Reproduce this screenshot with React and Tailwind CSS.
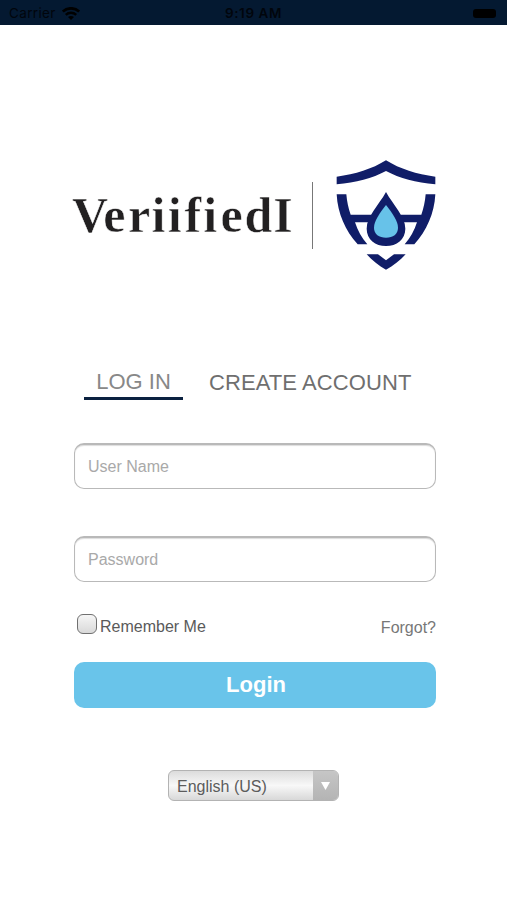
import { useState } from "react";

function WifiIcon() {
  return (
    <svg width="18" height="13" viewBox="0 0 18 13" fill="none">
      <path d="M.8 4.6C5.4.2 12.6.2 17.2 4.6" stroke="#000" strokeWidth="2.7" />
      <path d="M3.8 7.9c3-2.8 7.4-2.8 10.4 0" stroke="#000" strokeWidth="2.5" />
      <path d="M9 13 6 10c1.8-1.5 4.2-1.5 6 0z" fill="#000" />
    </svg>
  );
}

function StatusBar() {
  return (
    <header className="grid h-[25px] grid-cols-3 items-center bg-[#041931] pt-[2px] pr-[11px] pl-[9px] font-['Inter',sans-serif] text-[13.5px] leading-none text-[#01050c]">
      <div className="flex items-center gap-1.5">
        <span className="pt-px tracking-[0.35px]">Carrier</span>
        <WifiIcon />
      </div>
      <span className="pt-px pl-[2px] text-center text-[13.5px] font-semibold tracking-[0.55px]">
        9:19 AM
      </span>
      <span className="h-[9px] w-[23px] justify-self-end rounded-[3px] bg-black" />
    </header>
  );
}

function Wordmark() {
  return (
    <svg
      width="222"
      height="62"
      viewBox="0 0 222 62"
      className="mt-[26px] shrink-0"
    >
      <text
        x="0 31.2 56 79.5 95.7 112.5 131.3 148.5 172.5 201.3"
        y="46"
        fill="#222021"
        fontFamily="'Liberation Serif', serif"
        fontSize="50"
        fontWeight="700"
        stroke="#fff"
        strokeWidth="0.5"
      >
        VeriifiedI
      </text>
    </svg>
  );
}

function Shield() {
  return (
    <svg width="100" height="110" viewBox="258 29 300 330">
      <g fill="#101d68">
        <path d="M260 79C316 72 366 56 408 30c42 26 92 42 148 49v23c-58-5-107-18-148-40-41 22-90 35-148 40z" />
        <path d="M260 132h29c2 22 6 42 13 61h62v23h-49c8 24 20 47 37 66h-29c-37-41-60-92-63-150z" />
        <path d="M556 132h-29c-2 22-6 42-13 61h-62v23h49c-8 24-20 47-37 66h29c37-41 60-92 63-150z" />
        <path d="M408 125c-22 40-58 73-58 110 0 32 26 52 58 52s58-20 58-52c0-37-36-70-58-110z" />
        <path d="M350 312h34l24 18 24-18h35c-17 19-37 34-59 46-22-12-41-27-58-46z" />
      </g>
      <path
        d="M408 164c-19 25-36 48-36 68 0 19 15 30 36 30s36-11 36-30c0-20-17-43-36-68z"
        fill="#67c2e9"
      />
    </svg>
  );
}

function Field({ label, type, value, onChange }) {
  return (
    <input
      type={type}
      placeholder={label}
      aria-label={label}
      value={value}
      onChange={(e) => onChange(e.target.value)}
      className="block h-[46px] w-full rounded-[10px] border border-t-2 border-[#b9b9b9] bg-white px-[13px] pt-px text-base text-[#666] shadow-[inset_0_1px_1px_#ddd] outline-none placeholder:text-[#a9a9a9]"
    />
  );
}

export default function App() {
  const [userName, setUserName] = useState("");
  const [password, setPassword] = useState("");
  const [remember, setRemember] = useState(false);

  return (
    <div className="h-[900px] w-[507px] overflow-hidden bg-white font-['Liberation_Sans',Arial,sans-serif]">
      <StatusBar />

      <main className="mr-[71px] ml-[74px]">
        <div className="mt-[135px] -ml-[2px] flex h-[110px]">
          <Wordmark />
          <div className="mt-[22px] ml-[18px] h-[67px] w-px bg-[#777]" />
          <div className="ml-[23px] shrink-0">
            <Shield />
          </div>
        </div>

        <nav className="mt-[97px] ml-[10px] flex h-[33px] items-start text-[22px] leading-[30px] whitespace-nowrap">
          <button className="h-[33px] w-[99px] border-b-[3px] border-[#0b2140] text-[#888]">
            LOG IN
          </button>
          <button className="ml-[26px] pt-px tracking-[0.08px] text-[#6f6f6f]">
            CREATE ACCOUNT
          </button>
        </nav>

        <form className="mt-[43px]" onSubmit={(e) => e.preventDefault()}>
          <Field
            label="User Name"
            type="text"
            value={userName}
            onChange={setUserName}
          />
          <div className="mt-[47px]">
            <Field
              label="Password"
              type="password"
              value={password}
              onChange={setPassword}
            />
          </div>

          <div className="mt-[31px] flex h-[30px] items-start justify-between leading-[24px]">
            <label className="flex items-start text-[#5a5a5a]">
              <input
                type="checkbox"
                checked={remember}
                onChange={(e) => setRemember(e.target.checked)}
                className="mt-px mr-[3px] ml-[3px] size-5 appearance-none rounded-[6px] border-[1.5px] border-[#707070] bg-linear-to-b from-[#f6f6f6] to-[#d9d9d9] checked:bg-[#67c2e9]"
              />
              <span className="pt-[2px]">Remember Me</span>
            </label>
            <a href="#" className="pt-[3px] text-[#777]">
              Forgot?
            </a>
          </div>

          <button className="mt-[19px] block h-[46px] w-full rounded-[10px] bg-[#69c4ea] pb-[2px] pl-[2px] text-[22px] font-bold text-white">
            Login
          </button>
        </form>

        <button className="mt-[62px] ml-[94px] flex h-[31px] w-[171px] items-stretch overflow-hidden rounded-[6px] border border-[#b3b3b3] bg-linear-to-b from-[#dcdcdc] via-[#f8f8f8] to-[#d8d8d8] text-base text-[#5c5c5c]">
          <span className="flex-1 pt-px pl-2 text-left leading-[29px]">
            English (US)
          </span>
          <span className="flex w-[25px] items-center justify-center bg-linear-to-b from-[#c6c6c6] to-[#b4b4b4]">
            <svg width="9" height="8" viewBox="0 0 9 8">
              <path d="M0 0h9L4.5 8z" fill="#fff" />
            </svg>
          </span>
        </button>
      </main>
    </div>
  );
}
